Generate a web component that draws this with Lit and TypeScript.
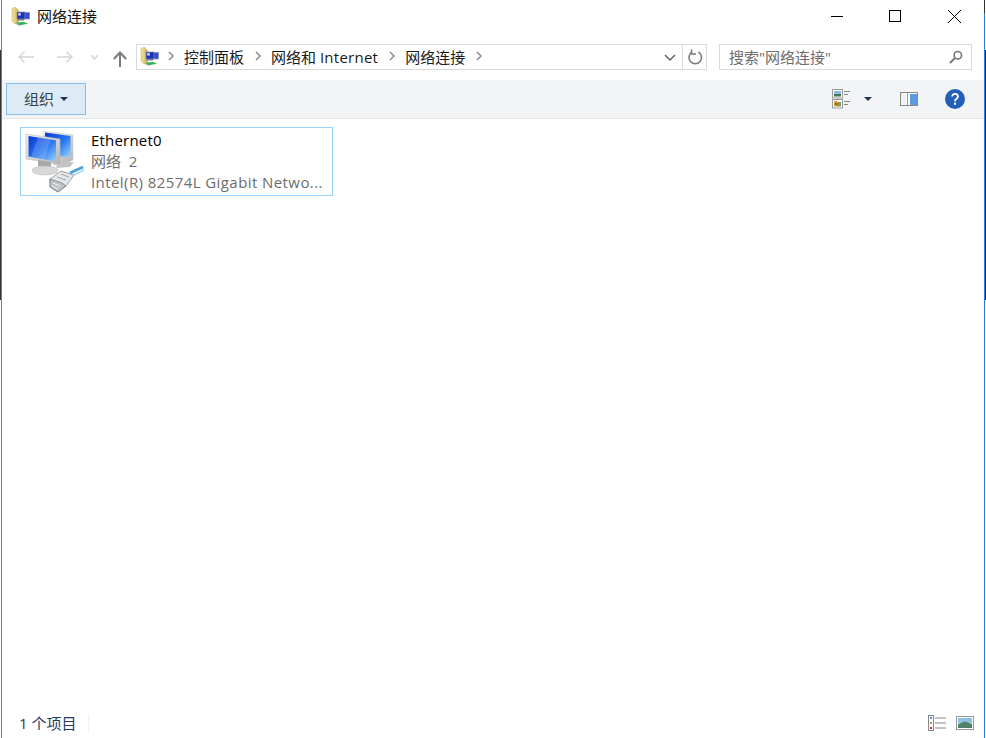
import { LitElement, html, css } from "lit";
import { customElement } from "lit/decorators.js";

const netFolder = (s: number) => html`<svg width=${s} height=${s} viewBox="0 0 20 20">
  <defs><linearGradient id="fg" x1="0" x2="1"><stop offset="0" stop-color="#f6e6a4"/><stop offset="1" stop-color="#d2ad55"/></linearGradient></defs>
  <path d="M1 1 L5 .5 L7.5 3.5 V15 L4 17 L1 14 Z" fill="url(#fg)" stroke="#c9a850" stroke-width=".5"/>
  <rect x="11" y="5.5" width="7.5" height="6.5" fill="#2c50d8" stroke="#8890a0" stroke-width=".7"/>
  <rect x="6" y="5" width="8" height="7" fill="#1c30b8" stroke="#8890a0" stroke-width=".7"/>
  <rect x="7.2" y="6" width="2.6" height="2.6" fill="#c0d0ff"/>
  <path d="M6 12 h7 v1.5 h-7z" fill="#7a7f88"/>
  <path d="M5 15.5 L13 15 L17 16.8 L9 18.2 Z" fill="#2fb350"/>
  <path d="M5 15.5 L9 18.2 v1 L5 17Z" fill="#9aa0a4"/>
</svg>`;

@customElement("app-root")
export class AppRoot extends LitElement {
  static styles = css`
    :host { display: block; width: 986px; height: 738px; }
    * { box-sizing: border-box; }
    .win {
      width: 986px; height: 738px; background: #fff; display: flex; flex-direction: column;
      border-left: 1px solid #fff; border-right: 2px solid #fff; position: relative;
      font-family: "Open Sans", "Noto Sans CJK SC", sans-serif; font-size: 15px; color: #1a1a1a;
    }
    .frame { position: absolute; width: 1px; }
    .fl { left: 0; top: 0; bottom: 0; background: #4a86c8; z-index: 2; }
    .fd { left: -1px; top: 50px; height: 250px; background: #333; }
    .fr { right: -1px; top: 13px; bottom: 0; background: #2f7fd9; }
    .frt { right: -1px; top: 0; height: 13px; background: #333; }
    .frd { right: -2px; top: 50px; height: 250px; background: #222; }
    .title { height: 44px; display: flex; align-items: flex-start; padding: 7px 0 0 10px; }
    .title .ic { width: 20px; height: 20px; }
    .title .t { margin: -1px 0 0 6px; line-height: 20px; color: #111; }
    .caps { margin-left: auto; display: flex; margin-top: 3px; }
    .caps svg { display: block; }
    .cap { width: 58px; height: 13px; display: flex; justify-content: center; }
    .cap.close { width: 60px; justify-content: flex-start; padding-left: 24px; }
    .nav { height: 26px; display: flex; align-items: stretch; }
    .arrows { width: 135px; display: flex; align-items: center; flex: none; padding-left: 17px; gap: 23px; }
    .arrows svg { display: block; }
    .a3 { margin-left: -6px; }
    .a4 { margin-left: -9px; margin-top: 4px; }
    .addr { width: 571px; border: 1px solid #d9d9d9; display: flex; align-items: center; flex: none; }
    .addr .ic { margin-left: 3px; width: 20px; height: 20px; flex: none; }
    .crumb { margin-top: -2px; }
    .lat { letter-spacing: .25px; }
    .chev { margin: 0 10px 2px 11px; flex: none; display: block; }
    .chev.first { margin-left: 8px; }
    .addr .end { margin-left: auto; height: 100%; display: flex; align-items: center; }
    .dd { width: 24px; display: flex; justify-content: center; }
    .refresh { width: 24px; height: 100%; border-left: 1px solid #d9d9d9; display: flex; align-items: center; justify-content: center; }
    .search {
      width: 253px; margin-left: 12px; border: 1px solid #d9d9d9; display: flex; align-items: center;
      padding: 0 8px 0 9px; color: #6d6d6d; flex: none;
    }
    .search svg { margin-left: auto; }
    .toolbar {
      margin-top: 10px; height: 39px; background: #f3f4f6; border-bottom: 1px solid #e6e6e6;
      display: flex; align-items: center; padding: 0 0 0 5px;
    }
    .org {
      width: 80px; height: 32px; background: #dcebf5; border: 1px solid #85bde6;
      display: flex; align-items: center; padding-left: 17px; color: #3a3f48; gap: 6px;
    }
    .tri { width: 0; height: 0; border-left: 4px solid transparent; border-right: 4px solid transparent; border-top: 4px solid #1f3550; }
    .tools { margin-left: auto; display: flex; align-items: center; }
    .tools svg { display: block; }
    .tools .tri { margin: 0 13px 0 14px; }
    .tools .pane { margin-right: 27px; margin-left: 15px; }
    .tools .help { margin-right: 19px; }
    .content { flex: 1; padding: 8px 0 0 19px; }
    .item { width: 313px; height: 69px; border: 1px solid #99d1ff; display: flex; padding: 0 0 0 3px; }
    .item svg { flex: none; margin-top: 1px; filter: blur(.35px); }
    .info { margin-left: 3px; padding-top: 2px; line-height: 21px; white-space: nowrap; width: 236px; }
    .name { color: #000; letter-spacing: .2px; }
    .sub { color: #6d6d6d; white-space: pre; }
    .desc { color: #6d6d6d; letter-spacing: .42px; }
    .status { height: 30px; display: flex; align-items: center; padding: 0 0 0 18px; color: #1f3a63; flex: none; }
    .status .sep { width: 1px; height: 16px; background: #efefef; margin-left: 12px; }
    .status .views { margin-left: auto; display: flex; gap: 9px; margin-right: 10px; align-items: center; }
    .status svg { display: block; }
  `;

  render() {
    const chev = (first = false) => html`<svg class="chev ${first ? "first" : ""}" width="6" height="10" viewBox="0 0 6 10"><path d="M1 1 L5 5 L1 9" fill="none" stroke="#8a8a8a" stroke-width="1.5"/></svg>`;
    return html`<div class="win">
      <div class="frame fl"></div><div class="frame fd"></div>
      <div class="frame fr"></div><div class="frame frt"></div><div class="frame frd"></div>
      <div class="title">
        <div class="ic">${netFolder(20)}</div>
        <span class="t">网络连接</span>
        <div class="caps">
          <div class="cap"><svg width="12" height="13" viewBox="0 0 12 13"><path d="M0 6.5 H12" stroke="#000"/></svg></div>
          <div class="cap"><svg width="12" height="12" viewBox="0 0 12 12"><rect x=".5" y=".5" width="11" height="11" fill="none" stroke="#000"/></svg></div>
          <div class="cap close"><svg width="13" height="13" viewBox="0 0 13 13"><path d="M0 0 L13 13 M13 0 L0 13" stroke="#000"/></svg></div>
        </div>
      </div>
      <div class="nav">
        <div class="arrows">
          <svg width="16" height="12" viewBox="0 0 16 12"><path d="M1 6 H16 M6.5 .8 L1 6 L6.5 11.2" fill="none" stroke="#d4d4d4" stroke-width="1.5"/></svg>
          <svg width="16" height="12" viewBox="0 0 16 12"><path d="M0 6 H15 M9.5 .8 L15 6 L9.5 11.2" fill="none" stroke="#d4d4d4" stroke-width="1.5"/></svg>
          <svg class="a3" width="9" height="6" viewBox="0 0 9 6"><path d="M1 1 L4.5 5 L8 1" fill="none" stroke="#d4d4d4" stroke-width="1.5"/></svg>
          <svg class="a4" width="14" height="16" viewBox="0 0 14 16"><path d="M7 16 V1.5 M.8 8 L7 1.5 L13.2 8" fill="none" stroke="#7a7a7a" stroke-width="2"/></svg>
        </div>
        <div class="addr">
          <div class="ic">${netFolder(20)}</div>
          ${chev(true)}<span class="crumb">控制面板</span>
          ${chev()}<span class="crumb">网络和 <span class="lat">Internet</span></span>
          ${chev()}<span class="crumb">网络连接</span>
          ${chev()}
          <div class="end">
            <div class="dd"><svg width="12" height="7" viewBox="0 0 12 7"><path d="M1 1 L6 6 L11 1" fill="none" stroke="#666" stroke-width="1.5"/></svg></div>
            <div class="refresh"><svg width="16" height="16" viewBox="0 0 16 16"><path d="M5 3 A6.3 6.3 0 1 0 11.5 3" fill="none" stroke="#7a7a7a" stroke-width="1.6"/><path d="M4.5 .3 V5 H9" fill="none" stroke="#7a7a7a" stroke-width="1.4"/></svg></div>
          </div>
        </div>
        <div class="search">
          <span class="crumb">搜索"网络连接"</span>
          <svg width="14" height="14" viewBox="0 0 14 14"><circle cx="8.8" cy="5.2" r="3.7" fill="none" stroke="#7a7a7a" stroke-width="1.7"/><path d="M6 8 L1 13" stroke="#7a7a7a" stroke-width="2.2"/></svg>
        </div>
      </div>
      <div class="toolbar">
        <div class="org"><span class="crumb">组织</span><span class="tri"></span></div>
        <div class="tools">
          <svg width="18" height="20" viewBox="0 0 18 20">
            <rect x=".5" y=".5" width="10" height="8.5" fill="#fff" stroke="#999"/><rect x="2" y="2" width="7" height="3" fill="#8fb7dc"/><rect x="2" y="5" width="7" height="2.5" fill="#48755a"/>
            <rect x=".5" y="10.5" width="10" height="8.5" fill="#fff" stroke="#999"/><rect x="2" y="12" width="3" height="5.5" fill="#c9a23a"/><rect x="5" y="13" width="4" height="4.5" fill="#7da04c"/><rect x="3" y="14" width="2" height="2" fill="#c84a3a"/>
            <path d="M12 2.5 H18 M12 5.5 H16 M12 12.5 H18 M12 15.5 H16" stroke="#888"/>
          </svg>
          <span class="tri"></span>
          <svg class="pane" width="18" height="14" viewBox="0 0 18 14">
            <rect x=".5" y=".5" width="17" height="13" fill="#fff" stroke="#888"/><rect x="1" y="1" width="5" height="12" fill="#f2f2f2"/><rect x="7" y="1" width="1" height="12" fill="#999"/><rect x="10" y="2" width="7" height="11" fill="#5a9be0"/>
          </svg>
          <svg class="help" width="20" height="20" viewBox="0 0 20 20"><circle cx="10" cy="10" r="10" fill="#2260b8"/><path d="M7.2 7.6 C7.2 3.8 13 4 13 7.4 C13 9.8 10 9.8 10 12.2" fill="none" stroke="#fff" stroke-width="1.8"/><rect x="9" y="13.6" width="2" height="2.2" fill="#fff"/></svg>
        </div>
      </div>
      <div class="content">
        <div class="item">
          <svg width="64" height="64" viewBox="0 0 64 64">
            <defs>
              <linearGradient id="scr" x1="0" y1="0" x2="1" y2="1"><stop offset="0" stop-color="#0a34d4"/><stop offset=".55" stop-color="#2a78f2"/><stop offset="1" stop-color="#9ad2fb"/></linearGradient>
              <linearGradient id="body" x1="0" y1="0" x2="1" y2="1"><stop offset="0" stop-color="#f4f4f4"/><stop offset="1" stop-color="#b4b4b4"/></linearGradient>
            </defs>
            <path d="M19 2 L49 6 V31 L40 35 L30 36 L19 20 Z" fill="url(#body)" stroke="#c4c4c4" stroke-width=".5"/>
            <path d="M21 3.5 L46.5 7 V28 L33 27 L21 12 Z" fill="url(#scr)"/>
            <path d="M34 33 L50 33 L46 38 L32 39 Z" fill="#c4c4c4"/>
            <path d="M2 5 L36 10 V35 L2 30 Z" fill="url(#body)" stroke="#b8b8b8" stroke-width=".6"/>
            <path d="M4.5 7 L32 11.2 V32.5 L4.5 27.5 Z" fill="url(#scr)"/>
            <path d="M14 8.6 L27 10.5 L20 30 L7 27.8 Z" fill="#fff" opacity=".18"/>
            <path d="M14 31 L27 33 V39 L14 37 Z" fill="#a8a8a8"/>
            <ellipse cx="21" cy="41.5" rx="13" ry="4.5" fill="#d8d8d8" stroke="#b4b4b4" stroke-width=".5"/>
            <path d="M26 50 L37 42 L50 46 L42 57 L34 63 L26 58 Z" fill="#e4e7e9" stroke="#7a8388" stroke-width=".7"/>
            <path d="M26 50 L38 54 L42 57 L34 63 L26 58 Z" fill="#bcc3c8" stroke="#6a7378" stroke-width=".7"/>
            <path d="M29 54 L36 57 M28 57 L34 60" stroke="#eef0f1" stroke-width="1"/>
            <path d="M33 48 L42 51 M37 45 L45 48" stroke="#8f989d" stroke-width=".8"/>
            <path d="M46 44 L59 38" stroke="#4aa2d2" stroke-width="3"/>
            <path d="M50 46 L60 41" stroke="#a9d8ee" stroke-width="1.6"/>
          </svg>
          <div class="info">
            <div class="name">Ethernet0</div>
            <div class="sub">网络  2</div>
            <div class="desc">Intel(R) 82574L Gigabit Netwo...</div>
          </div>
        </div>
      </div>
      <div class="status">
        <span class="crumb">1 个项目</span><span class="sep"></span>
        <div class="views">
          <svg width="19" height="16" viewBox="0 0 19 16">
            <rect x=".5" y=".5" width="5" height="15" fill="#fff" stroke="#888"/>
            <rect x="2" y="2" width="2" height="2" fill="#5a8fc0"/><rect x="2" y="7" width="2" height="2" fill="#c09040"/><rect x="2" y="12" width="2" height="2" fill="#c03030"/>
            <path d="M7 3 H18 M7 8 H18 M7 13 H18" stroke="#888"/>
          </svg>
          <svg width="18" height="14" viewBox="0 0 18 14">
            <rect x=".5" y=".5" width="17" height="13" fill="#fff" stroke="#999"/><rect x="2" y="2" width="14" height="5" fill="#8ec0e4"/><path d="M2 8 L9 5.5 L16 8 V12 H2Z" fill="#4f8068"/>
          </svg>
        </div>
      </div>
    </div>`;
  }
}
